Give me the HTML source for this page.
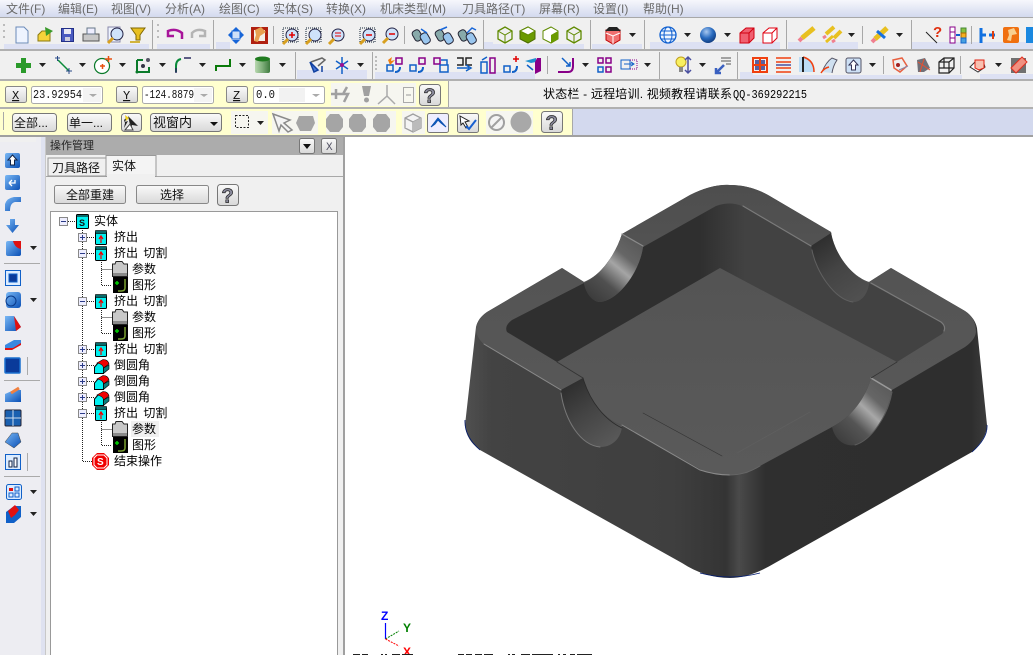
<!DOCTYPE html>
<html><head><meta charset="utf-8"><style>
html,body{margin:0;padding:0;background:#fff;overflow:hidden}
svg{display:block}
text{font-family:"Liberation Sans","WenQuanYi Zen Hei","Noto Sans CJK SC",sans-serif;font-size:12px;fill:#111}
.m{fill:#6a6a6a;font-size:12px}
.t{font-size:12px;fill:#000;word-spacing:2px}
.mono{font-family:"Liberation Mono",monospace;font-size:12px}
</style></head><body>
<svg xmlns="http://www.w3.org/2000/svg" width="1033" height="655" viewBox="0 0 1033 655">
<defs>
<linearGradient id="mb" x1="0" y1="0" x2="0" y2="1"><stop offset="0" stop-color="#f6f7fc"/><stop offset="1" stop-color="#d3d9ee"/></linearGradient>
<linearGradient id="btn" x1="0" y1="0" x2="0" y2="1"><stop offset="0" stop-color="#fafafa"/><stop offset="1" stop-color="#d8d8d8"/></linearGradient>
<linearGradient id="cyl" x1="0" y1="0" x2="1" y2="0"><stop offset="0" stop-color="#b8d8b0"/><stop offset=".5" stop-color="#7fae7a"/><stop offset="1" stop-color="#3d7a3d"/></linearGradient>
<radialGradient id="sph" cx=".4" cy=".3" r=".8"><stop offset="0" stop-color="#a8c8f0"/><stop offset=".5" stop-color="#2a6cc0"/><stop offset="1" stop-color="#0a3070"/></radialGradient>
<linearGradient id="blu" x1="0" y1="0" x2="1" y2="1"><stop offset="0" stop-color="#7ab8f5"/><stop offset="1" stop-color="#0a4fb5"/></linearGradient>
<linearGradient id="side" gradientUnits="userSpaceOnUse" x1="465" y1="0" x2="987" y2="0">
<stop offset="0" stop-color="#505050"/><stop offset=".05" stop-color="#434343"/><stop offset=".4" stop-color="#3f3f3f"/><stop offset=".5" stop-color="#343434"/><stop offset=".525" stop-color="#4a4a4a"/><stop offset=".575" stop-color="#2f2f2f"/><stop offset=".97" stop-color="#2e2e2e"/><stop offset="1" stop-color="#3c3c3c"/></linearGradient>
<linearGradient id="top" gradientUnits="userSpaceOnUse" x1="725" y1="185" x2="725" y2="475"><stop offset="0" stop-color="#4e4e4e"/><stop offset=".3" stop-color="#545454"/><stop offset="1" stop-color="#5a5a5a"/></linearGradient>
<linearGradient id="cav" gradientUnits="userSpaceOnUse" x1="700" y1="0" x2="745" y2="0"><stop offset="0" stop-color="#2f2f2f"/><stop offset="1" stop-color="#424242"/></linearGradient>
<linearGradient id="n1" gradientUnits="userSpaceOnUse" x1="590" y1="300" x2="640" y2="240"><stop offset="0" stop-color="#3a3a3a"/><stop offset=".3" stop-color="#505050"/><stop offset=".55" stop-color="#a5a5a5"/><stop offset=".72" stop-color="#666"/><stop offset="1" stop-color="#575757"/></linearGradient>
<linearGradient id="n2" gradientUnits="userSpaceOnUse" x1="815" y1="240" x2="860" y2="305"><stop offset="0" stop-color="#2d2d2d"/><stop offset=".45" stop-color="#444"/><stop offset="1" stop-color="#525252"/></linearGradient>
<linearGradient id="n3" gradientUnits="userSpaceOnUse" x1="565" y1="385" x2="610" y2="448"><stop offset="0" stop-color="#2d2d2d"/><stop offset=".45" stop-color="#444"/><stop offset="1" stop-color="#5a5a5a"/></linearGradient>
<linearGradient id="n4" gradientUnits="userSpaceOnUse" x1="835" y1="442" x2="888" y2="385"><stop offset="0" stop-color="#3a3a3a"/><stop offset=".35" stop-color="#555"/><stop offset=".58" stop-color="#a8a8a8"/><stop offset=".75" stop-color="#666"/><stop offset="1" stop-color="#5a5a5a"/></linearGradient>
<polygon id="a" points="0,0 7,0 3.5,4" fill="#222"/>
<g id="cy"><rect x=".5" y="1.500" width="11" height="13" rx="1" fill="#00f0f0" stroke="#000"/><rect x=".5" y=".5" width="11" height="3" fill="#0a6a6a" stroke="#000" stroke-width=".6"/><path d="M6,13V7M4,9L6,6L8,9" stroke="#f00000" stroke-width="1.200" fill="none"/></g>
<g id="fo"><path d="M.5,3H3L4,.5H10L12,3H15.500V15.500H.5Z" fill="#c8c8c8" stroke="#222"/><rect x="1" y="12" width="14" height="3" fill="#8a8a8a"/></g>
<g id="im"><rect width="15" height="16" fill="#000"/><path d="M12,2V11Q12,14 8,14H5" stroke="#7aa030" stroke-width="1.500" fill="none"/><path d="M4,4V8M2,6H6" stroke="#0c0" stroke-width="1.500"/></g>
<g id="fi"><path d="M.5,8L4,4H9.500V14.500H.5Z" fill="#00f0f0" stroke="#000"/><path d="M9.500,14.500L15,10V6L9.500,9Z" fill="#0a7a7a" stroke="#000" stroke-width=".6"/><path d="M3,4L9,.5Q14,.5 15,5L9.500,9Q9,5 3,4Z" fill="#f00000" stroke="#000" stroke-width=".6"/></g>
<g id="pl"><rect width="8" height="8" x=".5" y=".5" fill="#eef" stroke="#888"/><path d="M2,4.500H7M4.500,2V7" stroke="#2a3a88"/></g>
<g id="mi"><rect width="8" height="8" x=".5" y=".5" fill="#eef" stroke="#888"/><path d="M2,4.500H7" stroke="#2a3a88"/></g>
<g id="q"><rect x=".5" y=".5" width="21" height="21" rx="3" fill="url(#btn)" stroke="#777"/><text x="4.500" y="18.500" style="font:bold 20px 'Liberation Sans';fill:#8a8a9c;stroke:#222;stroke-width:.7">?</text></g>
<g id="zm"><circle cx="10" cy="7" r="6" fill="#cfe2fa" stroke="#224"/><path d="M6,11L1,16" stroke="#d8a020" stroke-width="3"/></g>
<g id="bi"><rect x="0" y="3" width="8" height="11" rx="3" transform="rotate(-30 4 8)" fill="#8aa" stroke="#223"/><rect x="8" y="6" width="8" height="11" rx="3" transform="rotate(-30 12 11)" fill="#9ac6ee" stroke="#223"/></g>
<g id="cb"><path d="M1,4L8,0L15,4V12L8,16L1,12Z" fill="none" stroke="#5f8a00" stroke-width="1.300"/><path d="M1,4L8,8L15,4M8,8V16" stroke="#5f8a00" fill="none"/></g>
<g id="hx"><path d="M4,0H13L17,5V13L13,18H4L0,13V5Z" fill="#a5a5a5"/></g>
</defs>

<!-- base chrome -->
<rect width="1033" height="138" fill="#d3d9ee"/>
<rect width="1033" height="17" fill="url(#mb)"/>
<rect y="17" width="1033" height="1" fill="#a8a8a8"/>
<rect y="18" width="1033" height="31" fill="#f0f0f0"/>
<rect y="49" width="1033" height="2" fill="#b0b0b0"/>
<rect y="51" width="1033" height="28" fill="#f0f0f0"/>
<rect y="79" width="1033" height="2" fill="#b0b0b0"/>
<rect y="81" width="1033" height="26" fill="#f0f0f0"/>
<rect y="81" width="448" height="26" fill="#ffffcf"/>
<rect y="107" width="1033" height="2" fill="#b0b0b0"/>
<rect y="109" width="572" height="26" fill="#ffffcf"/>
<rect x="572" y="109" width="461" height="26" fill="#d3d9ee"/>
<rect y="135" width="1033" height="2" fill="#a0a0a0"/>
<g fill="#f6f6f0"><rect x="331" y="83" width="85" height="23"/><rect x="231" y="111" width="37" height="23"/><rect x="272" y="111" width="46" height="23"/><rect x="326" y="111" width="70" height="23"/><rect x="402" y="111" width="23" height="23"/><rect x="486" y="111" width="47" height="23"/></g>
<!-- lavender accents -->
<g fill="#dde1f3"><rect x="4" y="44" width="145" height="5"/><rect x="157" y="44" width="53" height="5"/><rect x="216" y="42" width="14" height="7"/><rect x="484" y="42" width="9" height="7"/><rect x="484" y="44" width="100" height="5"/><rect x="592" y="44" width="50" height="5"/><rect x="650" y="42" width="130" height="7"/><rect x="788" y="42" width="70" height="7"/><rect x="912" y="42" width="121" height="7"/><rect x="297" y="70" width="70" height="9"/><rect x="375" y="72" width="160" height="7"/><rect x="980" y="74" width="53" height="5"/><rect x="740" y="72" width="13" height="7"/><rect x="752" y="75" width="210" height="4"/></g>
<!-- grips/separators -->
<g fill="#a8a8a8"><rect x="152" y="20" width="1" height="29"/><rect x="213" y="20" width="1" height="29"/><rect x="483" y="20" width="1" height="29"/><rect x="590" y="20" width="1" height="29"/><rect x="644" y="20" width="1" height="29"/><rect x="786" y="20" width="1" height="29"/><rect x="911" y="20" width="1" height="29"/><rect x="295" y="52" width="1" height="27"/><rect x="372" y="52" width="1" height="27"/><rect x="659" y="52" width="1" height="27"/><rect x="737" y="52" width="1" height="27"/><rect x="273" y="26" width="1" height="18"/><rect x="404" y="26" width="1" height="18"/><rect x="862" y="26" width="1" height="18"/><rect x="971" y="26" width="1" height="18"/><rect x="547" y="56" width="1" height="18"/><rect x="883" y="56" width="1" height="18"/><rect x="960" y="56" width="1" height="18"/><rect x="448" y="81" width="1" height="26"/><rect x="572" y="109" width="1" height="26"/><rect x="3" y="112" width="1" height="18"/></g>

<!-- menu -->
<text class="m" x="6" y="13">文件(F)</text><text class="m" x="58" y="13">编辑(E)</text><text class="m" x="111" y="13">视图(V)</text><text class="m" x="165" y="13">分析(A)</text><text class="m" x="219" y="13">绘图(C)</text><text class="m" x="273" y="13">实体(S)</text><text class="m" x="326" y="13">转换(X)</text><text class="m" x="380" y="13">机床类型(M)</text><text class="m" x="462" y="13">刀具路径(T)</text><text class="m" x="539" y="13">屏幕(R)</text><text class="m" x="593" y="13">设置(I)</text><text class="m" x="643" y="13">帮助(H)</text>

<!-- row 1 -->
<path d="M16,27H24L28,31V43H16Z" fill="#eef4ff" stroke="#6a8ab8"/>
<path d="M38,35L42,31H50V41H38Z" fill="#f5d33a" stroke="#8a7a10"/><path d="M45,27L53,31L46,36Z" fill="#3a9a2a"/>
<rect x="61.500" y="28.500" width="12" height="13" fill="#4a5ac0" stroke="#223088"/><rect x="64" y="29" width="7" height="5" fill="#e8e8f4"/><rect x="65" y="37" width="5" height="4" fill="#ccd"/>
<rect x="83" y="34" width="16" height="7" fill="#c8c8c8" stroke="#555"/><path d="M87,34V28H95V34Z" fill="#eef" stroke="#678"/>
<path d="M108,27H120V42H108Z" fill="#eef4ff" stroke="#88a"/><use href="#zm" x="107" y="27"/>
<path d="M131,28H145L140,35V40H136V35Z" fill="#e8c020" stroke="#806800"/><path d="M130,42H140" stroke="#c8a000" stroke-width="1.500"/>
<path d="M168,31Q176,28 182,33V39M168,30V36H174" fill="none" stroke="#a8149a" stroke-width="2.500"/>
<path d="M205,31Q197,28 192,33V38M205,30V36H199" fill="none" stroke="#b4b4b4" stroke-width="2.500"/>
<path d="M236,27L240,31H232ZM236,44L232,40H240ZM228,35L232,31V39ZM244,35L240,39V31Z" fill="#1866d8"/><rect x="232" y="31" width="8" height="8" fill="#cfe0f8" stroke="#1866d8"/>
<rect x="251" y="27" width="17" height="17" fill="#b02010"/><rect x="254" y="30" width="11" height="11" fill="#f4f0e8"/><path d="M255,30L261,27L266,32L260,36L258,42L254,41L256,35Z" fill="#e8a050"/>
<g><rect x="283" y="28" width="15" height="14" fill="none" stroke="#123" stroke-dasharray="1 1"/><use href="#zm" x="282" y="28"/><path d="M289,35H295M292,32V38" stroke="#e00000" stroke-width="1.500"/></g>
<g><rect x="306" y="28" width="15" height="14" fill="none" stroke="#123" stroke-dasharray="1 1"/><use href="#zm" x="305" y="28"/></g>
<g><use href="#zm" x="328" y="28"/><path d="M335,33H341M335,36H341" stroke="#e00000"/></g>
<g><rect x="360" y="28" width="15" height="14" fill="none" stroke="#123" stroke-dasharray="1 1"/><use href="#zm" x="359" y="28"/><path d="M366,35H372" stroke="#e00000" stroke-width="1.500"/></g>
<g><use href="#zm" x="382" y="27"/><path d="M389,34H395" stroke="#e00000" stroke-width="1.500"/></g>
<use href="#bi" x="413" y="27"/><use href="#bi" x="436" y="27"/><use href="#bi" x="459" y="27"/>
<path d="M421,29L427,33M440,30L447,27M467,33L472,28L476,30" stroke="#1866d8" fill="none" stroke-width="1.500"/>
<use href="#cb" x="497" y="27"/>
<path d="M520,31L528,27L535,31V39L528,43L520,39Z" fill="#6a9a00" stroke="#4a6a00"/><path d="M520,31L528,35L535,31L528,27Z" fill="#fff" stroke="#5f8a00"/>
<path d="M543,31L551,27L558,31V39L551,43L543,39Z" fill="#fff" stroke="#5f8a00"/><path d="M551,35L558,31V39L551,43Z" fill="#6a9a00"/>
<use href="#cb" x="566" y="27"/>
<path d="M606,30H620V40L613,44L606,40Z" fill="#f07070" stroke="#c00000"/><path d="M605,31L609,27H617L621,31Z" fill="#222"/><path d="M613,36V44M606,33L613,36L620,33" stroke="#fff" fill="none"/>
<use href="#a" x="629" y="33"/>
<circle cx="668" cy="35" r="8" fill="#eef5ff" stroke="#1060d0" stroke-width="1.300"/><ellipse cx="668" cy="35" rx="4" ry="8" fill="none" stroke="#1060d0"/><path d="M660,35H676M661,31H675M661,39H675" stroke="#1060d0"/>
<use href="#a" x="684" y="33"/>
<circle cx="708" cy="35" r="8" fill="url(#sph)"/>
<use href="#a" x="724" y="33"/>
<path d="M740,33L746,28H754V38L749,43H740Z" fill="#f06070" stroke="#d00010"/><path d="M740,33H749V43M749,33L754,28" stroke="#d00010" fill="none"/>
<path d="M763,33L769,28H777V38L772,43H763Z" fill="#fff" stroke="#e00010"/><path d="M763,33H772V43M772,33L777,28" stroke="#e00010" fill="none"/>
<path d="M802,38L814,28" stroke="#e8c020" stroke-width="5"/><path d="M802,38L799,41" stroke="#f08090" stroke-width="4"/>
<path d="M826,34L834,27" stroke="#e8c020" stroke-width="4"/><path d="M834,38L841,31" stroke="#e8c020" stroke-width="4"/><path d="M826,42L833,36" stroke="#e8c020" stroke-width="3"/><path d="M826,36L823,38M835,40L832,42" stroke="#f08090" stroke-width="3"/>
<use href="#a" x="848" y="33"/>
<path d="M875,39L887,28" stroke="#e8c020" stroke-width="5"/><path d="M877,31L885,38" stroke="#1870e0" stroke-width="3"/><path d="M875,39L872,42" stroke="#f08090" stroke-width="4"/>
<use href="#a" x="896" y="33"/>
<path d="M926,32L937,43" stroke="#222"/><text x="933" y="37" style="font:bold 15px 'Liberation Sans';fill:#e03010">?</text>
<rect x="950" y="27" width="5" height="16" fill="#fff" stroke="#880088"/><path d="M950,32H955M950,38H955" stroke="#880088"/><rect x="961" y="28" width="5" height="5" fill="#88c040" stroke="#483"/><rect x="961" y="33" width="5" height="5" fill="#f4b020" stroke="#a60"/><rect x="961" y="38" width="5" height="5" fill="#48a0e0" stroke="#16c"/><path d="M956,35H960" stroke="#1060d0" stroke-width="2"/>
<path d="M981,28V43M981,35H986M995,35H989" stroke="#1070e0" stroke-width="3"/><path d="M993,31V39" stroke="#e04010" stroke-width="2"/>
<rect x="1003" y="27" width="16" height="16" rx="2" fill="#f07010"/><path d="M1008,30L1014,28L1017,34L1012,35L1011,41L1007,40L1009,35Z" fill="#f8d090"/>
<rect x="1026" y="27" width="7" height="16" fill="#1a88e0"/>

<!-- row 2 -->
<path d="M21,58H26V63H31V68H26V73H21V68H16V63H21Z" fill="#2a9a2a"/>
<use href="#a" x="39" y="63"/>
<path d="M58,60L69,71" stroke="#0a8a3a" stroke-width="1.500"/><path d="M55,58H60M57.500,56V61M66,71H72M69,68V74" stroke="#2a4a88"/>
<use href="#a" x="79" y="63"/>
<circle cx="102" cy="66" r="7.500" fill="#fff" stroke="#0a7a2a" stroke-width="1.200"/><path d="M100,66H105M102.500,64V69M105,59H112M108.500,56V62" stroke="#e85010" stroke-width="1.500"/>
<use href="#a" x="119" y="63"/>
<path d="M137,60V72H149V67M137,60H143" fill="none" stroke="#0a7a2a" stroke-width="2"/><circle cx="143" cy="66" r="2" fill="#334"/><circle cx="148" cy="60" r="2" fill="#556"/><circle cx="137" cy="72" r="1.500" fill="#0a7a2a"/>
<use href="#a" x="159" y="63"/>
<path d="M176,72V66Q176,60 181,59" fill="none" stroke="#0a8a3a" stroke-width="2"/><path d="M184,58H191M176,68V73" stroke="#2a2a60" stroke-width="1.500"/>
<use href="#a" x="199" y="63"/>
<path d="M216,71V66H230V59" fill="none" stroke="#0a7a0a" stroke-width="2"/>
<use href="#a" x="239" y="63"/>
<rect x="255" y="59" width="15" height="14" fill="url(#cyl)" rx="2"/><ellipse cx="262.500" cy="59" rx="7.500" ry="2.500" fill="#1f7a1f"/>
<use href="#a" x="279" y="63"/>
<path d="M311,62L322,58L325,60L318,66" fill="none" stroke="#666" stroke-width="1.500"/><path d="M310,62L318,70L314,72ZM322,66V72" stroke="#1040a0" stroke-width="1.500" fill="#4a78d8"/>
<path d="M342,57V74M336,61L348,69M348,61L336,69" stroke="#1060c8" stroke-width="1.500"/><circle cx="342" cy="65" r="2" fill="#a01090"/>
<use href="#a" x="357" y="63"/>
<g fill="#bbb"><rect x="375" y="56" width="2" height="2"/><rect x="375" y="60" width="2" height="2"/><rect x="375" y="64" width="2" height="2"/><rect x="375" y="68" width="2" height="2"/><rect x="3" y="24" width="2" height="2"/><rect x="3" y="30" width="2" height="2"/><rect x="3" y="36" width="2" height="2"/><rect x="157" y="24" width="2" height="2"/><rect x="157" y="30" width="2" height="2"/><rect x="157" y="36" width="2" height="2"/></g>
<g><rect x="387" y="65" width="6" height="6" fill="none" stroke="#1060c8" stroke-width="1.500"/><rect x="396" y="58" width="6" height="6" fill="none" stroke="#880088" stroke-width="1.500"/><path d="M388,60L392,57L391,61L395,60L390,65Z" fill="#f08010"/><path d="M395,72Q400,72 400,67" fill="none" stroke="#1060c8" stroke-width="2"/></g>
<g><rect x="410" y="65" width="6" height="6" fill="none" stroke="#1060c8" stroke-width="1.500"/><rect x="419" y="58" width="6" height="6" fill="none" stroke="#880088" stroke-width="1.500"/><path d="M418,72Q423,72 423,67" fill="none" stroke="#1060c8" stroke-width="2"/></g>
<g><rect x="434" y="58" width="6" height="6" fill="none" stroke="#880088" stroke-width="1.500"/><rect x="440" y="65" width="8" height="7" fill="none" stroke="#1060c8" stroke-width="1.500"/><path d="M441,60H447V65" fill="none" stroke="#1060c8" stroke-width="1.500"/></g>
<g><path d="M457,58H463V65H457M472,58H466V65H472" fill="none" stroke="#222" stroke-width="1.500"/><path d="M457,68H469M466,65L471,68L466,71" fill="none" stroke="#1060c8" stroke-width="1.500"/></g>
<g><rect x="481" y="62" width="6" height="11" fill="none" stroke="#1060c8" stroke-width="1.500"/><rect x="490" y="58" width="5" height="15" fill="none" stroke="#880088" stroke-width="1.500"/><path d="M482,60L487,57" stroke="#1060c8" stroke-width="1.500"/></g>
<g><rect x="504" y="66" width="6" height="6" fill="none" stroke="#1060c8" stroke-width="1.500"/><path d="M513,59H519M516,56V62" stroke="#e00000" stroke-width="1.500"/><path d="M512,72Q517,72 517,66" fill="none" stroke="#1060c8" stroke-width="2"/></g>
<g><path d="M525,61L536,58V62L531,63Z" fill="#2090d0"/><path d="M537,58H541V71L535,74V62Z" fill="#880088"/><path d="M527,65L533,70" stroke="#1060c8" stroke-width="1.500"/></g>
<path d="M558,72H568Q573,72 573,66V58" fill="none" stroke="#880088" stroke-width="2"/><path d="M562,58L570,66M566,66H570V62" fill="none" stroke="#1060c8" stroke-width="1.500"/>
<use href="#a" x="582" y="63"/>
<g fill="none" stroke-width="1.500"><rect x="598" y="58" width="5" height="5" stroke="#880088"/><rect x="606" y="58" width="5" height="5" stroke="#880088"/><rect x="598" y="67" width="5" height="5" stroke="#1060c8"/><rect x="606" y="67" width="5" height="5" stroke="#880088"/></g>
<rect x="621" y="60" width="9" height="9" fill="none" stroke="#1060c8"/><path d="M630,60H637V69H630" fill="none" stroke="#880088" stroke-dasharray="1 1"/><path d="M624,64H633M631,62L634,64L631,66" fill="none" stroke="#1060c8"/>
<use href="#a" x="644" y="63"/>
<circle cx="681" cy="62" r="5" fill="#f8f060" stroke="#c0a020"/><rect x="679" y="67" width="4" height="5" fill="#888"/><path d="M688,57V73M685,60L688,57L691,60M685,70L688,73L691,70" fill="none" stroke="#4a50a0" stroke-width="1.500"/>
<use href="#a" x="699" y="63"/>
<path d="M716,73L724,65M716,68V73H721" fill="none" stroke="#3a60c0" stroke-width="2.500"/><path d="M721,58H731M721,61H731M726,64H731" stroke="#555"/>
<g fill="none" stroke="#f04010" stroke-width="2"><rect x="753" y="58" width="14" height="14"/><path d="M760,58V72M753,65H767"/></g><rect x="755" y="60" width="4" height="4" fill="#5a60a0"/><rect x="761" y="60" width="4" height="4" fill="#5a60a0"/><rect x="755" y="66" width="4" height="4" fill="#5a60a0"/><rect x="761" y="66" width="4" height="4" fill="#5a60a0"/>
<path d="M776,58H791M776,72H791M776,62H791M776,68H791" stroke="#f04010" stroke-width="1.500"/><path d="M776,65H791" stroke="#4a50a0" stroke-width="1.500"/>
<path d="M799,72V57H803Q814,60 814,72Z" fill="#bcdcf5"/><path d="M803,57Q814,60 814,72" fill="none" stroke="#f04010" stroke-width="1.500"/><path d="M803,57V72" stroke="#222" stroke-width="2"/>
<path d="M822,72Q826,62 832,58L837,60Q833,66 832,73" fill="#cfe0f0" stroke="#556"/><path d="M821,73Q824,68 829,67" fill="none" stroke="#f04010" stroke-width="1.500"/>
<rect x="846" y="58" width="15" height="15" rx="2" fill="#cde0f5" stroke="#556"/><path d="M853.500,60L858,65H855.500V70H851.500V65H849Z" fill="#fff" stroke="#335"/>
<use href="#a" x="869" y="63"/>
<path d="M893,60L902,58L907,66L900,72L894,68Z" fill="none" stroke="#e86040" stroke-width="1.500"/><circle cx="898" cy="65" r="2" fill="#a02020"/><path d="M899,70L908,66" stroke="#88a"/>
<path d="M917,60L925,58L930,68L924,72L918,72Z" fill="#707078"/><path d="M918,62L930,70M924,59L920,72" stroke="#e85030"/>
<g fill="none" stroke="#222" stroke-width="1.200"><path d="M939,62L944,58H954V68L949,73H939Z"/><path d="M939,62H949V73M949,62L954,58M944,58V68H954M939,68H949"/></g>
<path d="M970,67L976,61H983L985,67L978,72Z" fill="#fff" stroke="#333"/><path d="M975,60H984V68L979,70L975,68Z" fill="#f8c0b0" stroke="#e02010"/>
<use href="#a" x="995" y="63"/>
<rect x="1011" y="58" width="15" height="15" fill="#707070"/><path d="M1011,68L1022,57L1027,62L1016,73Z" fill="#f09080" stroke="#e03020"/>

<!-- row 3 -->
<g><rect x="5.500" y="86.500" width="21" height="16" rx="2" fill="url(#btn)" stroke="#888"/><text x="12" y="99" style="font:12px 'Liberation Mono';text-decoration:underline">X</text></g>
<g><rect x="31.500" y="86.500" width="71" height="17" rx="2" fill="#fff" stroke="#aaa"/><text class="mono" x="33" y="98" textLength="49" lengthAdjust="spacingAndGlyphs">23.92954</text><rect x="83" y="88" width="18" height="14" fill="#f4f4f4"/><polygon points="89,94 97,94 93,97" fill="#aaa"/></g>
<g><rect x="116.500" y="86.500" width="21" height="16" rx="2" fill="url(#btn)" stroke="#888"/><text x="123" y="99" style="font:12px 'Liberation Mono';text-decoration:underline">Y</text></g>
<g><rect x="142.500" y="86.500" width="71" height="17" rx="2" fill="#fff" stroke="#aaa"/><text class="mono" x="144" y="98" textLength="50" lengthAdjust="spacingAndGlyphs">-124.8879</text><rect x="194" y="88" width="18" height="14" fill="#f4f4f4"/><polygon points="200,94 208,94 204,97" fill="#aaa"/></g>
<g><rect x="226.500" y="86.500" width="21" height="16" rx="2" fill="url(#btn)" stroke="#888"/><text x="233" y="99" style="font:12px 'Liberation Mono';text-decoration:underline">Z</text></g>
<g><rect x="253.500" y="86.500" width="71" height="17" rx="2" fill="#fff" stroke="#aaa"/><rect x="279" y="88" width="26" height="14" fill="#f2f2f2"/><text class="mono" x="256" y="98" textLength="19" lengthAdjust="spacingAndGlyphs">0.0</text><polygon points="312,94 320,94 316,97" fill="#aaa"/></g>
<path d="M336,89V99M331,94H342M347,87L343,94H348L344,102" stroke="#a0a0a0" stroke-width="2.500" fill="none"/>
<path d="M362,86H371L369,96H364Z" fill="#a0a0a0"/><circle cx="366.500" cy="100" r="2.500" fill="#a0a0a0"/>
<path d="M387,85V96L378,104M387,96L395,104" fill="none" stroke="#aaa" stroke-width="1.500"/><rect x="403.500" y="87.500" width="10" height="15" fill="#f8f8f0" stroke="#aaa"/><path d="M406,95H411" stroke="#999"/>
<use href="#q" x="419" y="84"/>
<text x="543" y="98" textLength="189" style="font-size:12px;fill:#000">状态栏 - 远程培训. 视频教程请联系</text>
<text x="733" y="98" style="font-family:'Liberation Mono';font-size:12px;fill:#000" textLength="74" lengthAdjust="spacingAndGlyphs">QQ-369292215</text>

<!-- row 4 -->
<g><rect x="12.500" y="113.500" width="44" height="18" rx="3" fill="url(#btn)" stroke="#777"/><text x="14" y="127">全部...</text></g>
<g><rect x="67.500" y="113.500" width="44" height="18" rx="3" fill="url(#btn)" stroke="#777"/><text x="69" y="127">单一...</text></g>
<g><rect x="121.500" y="113.500" width="20" height="18" rx="3" fill="url(#btn)" stroke="#777"/><path d="M128,116L138,126L132,125L131,129ZM124,120L127,117L125,122L128,121L124,128L125,123Z" fill="#222"/><path d="M125,115L129,118L126,121Z" fill="#f0d020"/><path d="M125,130L130,124L133,130Z" fill="#fff" stroke="#444"/></g>
<g><rect x="150.500" y="113.500" width="71" height="18" rx="3" fill="url(#btn)" stroke="#777"/><text x="153" y="127" style="font-size:13px">视窗内</text><polygon points="210,122 218,122 214,126" fill="#111"/></g>
<rect x="235.500" y="115.500" width="13" height="12" fill="none" stroke="#222" stroke-dasharray="2 1.500"/><use href="#a" x="257" y="121"/>
<path d="M273,114L290,120L284,123L292,130L288,132L281,125L279,131Z" fill="#f4f4f4" stroke="#8a8a8a" stroke-width="1.500"/>
<path d="M299,116H313L315,123L311,131H300L296,123Z" fill="#a5a5a5"/><use href="#hx" x="326" y="114"/><use href="#hx" x="349" y="114"/><use href="#hx" x="373" y="114"/>
<g fill="#f4f4f4" stroke="#a0a0a0" stroke-width="1.300"><path d="M405,118L413,114L421,118V128L413,132L405,128Z"/><path d="M405,118L413,122L421,118M413,122V132" fill="none"/></g><path d="M413,122L421,118V128L413,132Z" fill="#bbb"/>
<g><rect x="427.500" y="113.500" width="21" height="19" rx="2" fill="#eef" stroke="#777"/><path d="M431,127L438,118L446,127L441,123L438,120L435,124Z" fill="#0a70d8" stroke="#0a50b0"/></g>
<g><rect x="457.500" y="113.500" width="21" height="19" rx="2" fill="url(#btn)" stroke="#777"/><path d="M460,116L469,121L465,122L468,127L466,128L463,123L461,125Z" fill="#fff" stroke="#222"/><path d="M466,126L469,129L476,120" fill="none" stroke="#1860d0" stroke-width="2"/></g>
<circle cx="496.500" cy="122.500" r="7.500" fill="#f4f4f4" stroke="#a0a0a0" stroke-width="2"/><path d="M491,128L502,117" stroke="#a0a0a0" stroke-width="2"/>
<circle cx="521" cy="122" r="10.500" fill="#a8a8a8"/>
<use href="#q" x="541" y="111"/>

<!-- left toolbar -->
<rect y="137" width="45" height="518" fill="#ededf2"/>
<rect x="41" y="137" width="4" height="518" fill="#dfe2f0"/>
<rect y="137" width="36" height="5" fill="#f0f0f0"/>
<rect x="45" y="137" width="1" height="518" fill="#c8c8c8"/>
<rect x="46" y="137" width="4" height="518" fill="#f0f0f0"/>
<g>
<rect x="5" y="153" width="15" height="15" rx="2" fill="url(#blu)"/><path d="M12.500,155L17,160H14.500V165H10.500V160H8Z" fill="#fff" stroke="#124"/>
<rect x="5" y="175" width="15" height="15" rx="2" fill="url(#blu)"/><path d="M9,183H15V180M9,183L12,186M9,183L12,180" stroke="#fff" fill="none" stroke-width="1.300"/>
<path d="M5,211V204Q7,198 14,197H21V202H15Q10,203 10,211Z" fill="url(#blu)"/>
<path d="M10,219H15V225H19L12.500,233L6,225H10Z" fill="url(#blu)"/>
<rect x="6" y="241" width="15" height="15" rx="2" fill="url(#blu)"/><path d="M13,241H21V249Q15,248 13,241Z" fill="#e01010"/><use href="#a" x="30" y="246"/>
<rect x="4" y="263" width="36" height="1" fill="#aaa"/>
<rect x="5.500" y="270.500" width="15" height="15" fill="#dcecff" stroke="#1060c8"/><rect x="9" y="274" width="8" height="8" fill="#0a3a9a" stroke="#1060c8"/>
<rect x="6" y="292" width="15" height="16" rx="3" fill="url(#blu)"/><circle cx="11" cy="301" r="5" fill="none" stroke="#0a3a8a"/><use href="#a" x="30" y="298"/>
<path d="M5,316H14L21,327L16,331H5Z" fill="url(#blu)"/><path d="M14,316L21,327L16,331Z" fill="#e01010"/>
<path d="M5,345L14,340H21V344L12,350H5Z" fill="#3a88e0"/><path d="M5,348H13L21,343V345L12,350H5Z" fill="#e01010"/>
<rect x="5" y="358" width="15" height="15" rx="1" fill="#0a3a9a" stroke="#1a70d0" stroke-width="1.500"/><rect x="27" y="357" width="1" height="18" fill="#aaa"/>
<rect x="4" y="380" width="36" height="1" fill="#aaa"/>
<path d="M5,394L14,390H21V402H5Z" fill="url(#blu)"/><path d="M11,393L19,388" stroke="#f08040" stroke-width="3"/>
<rect x="5" y="410" width="16" height="16" rx="1" fill="#1a60b0" stroke="#223"/><path d="M13,410V426M5,418H21" stroke="#cde"/>
<path d="M5,442L12,433H18L21,442L14,448Z" fill="url(#blu)" stroke="#444" stroke-width=".5"/>
<rect x="5.500" y="454.500" width="15" height="15" fill="#dcecff" stroke="#1060c8"/><rect x="9" y="461" width="3" height="6" fill="#fff" stroke="#124"/><rect x="14" y="458" width="3" height="9" fill="#fff" stroke="#124"/><rect x="27" y="453" width="1" height="18" fill="#aaa"/>
<rect x="4" y="476" width="36" height="1" fill="#aaa"/>
<rect x="6.500" y="484.500" width="15" height="15" rx="2" fill="#dcecff" stroke="#1060c8"/><rect x="9" y="488" width="4" height="3" fill="#e01010"/><g fill="none" stroke="#1060c8"><rect x="15" y="487" width="4" height="4"/><rect x="9" y="493" width="4" height="4"/><rect x="15" y="493" width="4" height="4"/></g><use href="#a" x="30" y="490"/>
<path d="M6,512L14,506H21V517L14,523H6Z" fill="#1060c8"/><path d="M8,511L15,505L19,510L15,515L11,518Z" fill="#e01010"/><use href="#a" x="30" y="512"/>
</g>

<!-- panel -->
<rect x="46" y="137" width="297" height="18" fill="#acacac"/>
<text x="50" y="149" style="font-size:11px;fill:#222">操作管理</text>
<rect x="299.500" y="138.500" width="15" height="15" rx="2" fill="url(#btn)" stroke="#777"/><polygon points="303,144 311,144 307,149" fill="#111"/>
<rect x="321.500" y="138.500" width="15" height="15" rx="2" fill="url(#btn)" stroke="#777"/><text x="326" y="150" style="font:11px 'Liberation Mono';fill:#556">X</text>
<rect x="46" y="155" width="297" height="21" fill="#f0f0f0"/>
<rect x="46" y="176" width="297" height="479" fill="#f0f0f0"/>
<rect x="46" y="176" width="297" height="1" fill="#a8a8a8"/>
<rect x="48" y="158" width="58" height="18" fill="#f0f0f0" stroke="#999"/>
<text x="52" y="172" style="font-size:12px">刀具路径</text>
<rect x="106" y="155.500" width="50" height="21" fill="#f4f4f4" stroke="#999"/><rect x="107" y="174" width="48" height="4" fill="#f0f0f0"/>
<text x="112" y="170" style="font-size:12px">实体</text>
<rect x="54.500" y="185.500" width="71" height="18" rx="2" fill="url(#btn)" stroke="#888"/><text x="66" y="199">全部重建</text>
<rect x="136.500" y="185.500" width="72" height="18" rx="2" fill="url(#btn)" stroke="#888"/><text x="160" y="199">选择</text>
<use href="#q" x="217" y="184"/>
<rect x="50.500" y="211.500" width="287" height="450" fill="#fff" stroke="#999"/>
<rect x="338" y="177" width="5" height="478" fill="#f0f0f0"/>
<rect x="343" y="137" width="2" height="518" fill="#a0a0a0"/>

<!-- tree -->
<g stroke="#222" stroke-dasharray="1 1" fill="none"><path d="M82.500,228V461.500H92"/><path d="M68,221.500H75"/><path d="M87,237.500H94M87,253.500H94M87,301.500H94M87,349.500H94M87,365.500H94M87,381.500H94M87,397.500H94M87,413.500H94"/><path d="M101.500,262V285.500H112M101.500,269.500H112M101.500,310V333.500H112M101.500,317.500H112M101.500,422V445.500H112M101.500,429.500H112"/></g>
<use href="#mi" x="59" y="217"/>
<rect x="76.500" y="214.500" width="12" height="14" rx="1" fill="#00f0f0" stroke="#000"/><rect x="77" y="215" width="11" height="2" fill="#0a6a6a"/><text x="79" y="226" style="font:bold 9px 'Liberation Sans'">S</text>
<text class="t" x="94" y="225">实体</text>
<use href="#pl" x="78" y="233"/><use href="#cy" x="95" y="230"/><text class="t" x="114" y="241">挤出</text>
<use href="#mi" x="78" y="249"/><use href="#cy" x="95" y="246"/><text class="t" x="114" y="257">挤出 切割</text>
<use href="#fo" x="112" y="261"/><text class="t" x="132" y="273">参数</text>
<use href="#im" x="113" y="277"/><text class="t" x="132" y="289">图形</text>
<use href="#mi" x="78" y="297"/><use href="#cy" x="95" y="294"/><text class="t" x="114" y="305">挤出 切割</text>
<use href="#fo" x="112" y="309"/><text class="t" x="132" y="321">参数</text>
<use href="#im" x="113" y="325"/><text class="t" x="132" y="337">图形</text>
<use href="#pl" x="78" y="345"/><use href="#cy" x="95" y="342"/><text class="t" x="114" y="353">挤出 切割</text>
<use href="#pl" x="78" y="361"/><use href="#fi" x="94" y="359"/><text class="t" x="114" y="369">倒圆角</text>
<use href="#pl" x="78" y="377"/><use href="#fi" x="94" y="375"/><text class="t" x="114" y="385">倒圆角</text>
<use href="#pl" x="78" y="393"/><use href="#fi" x="94" y="391"/><text class="t" x="114" y="401">倒圆角</text>
<use href="#mi" x="78" y="409"/><use href="#cy" x="95" y="406"/><text class="t" x="114" y="417">挤出 切割</text>
<use href="#fo" x="112" y="421"/><rect x="131" y="421" width="28" height="16" fill="#f0f0f0"/><text class="t" x="132" y="433">参数</text>
<use href="#im" x="113" y="437"/><text class="t" x="132" y="449">图形</text>
<path d="M97,453H104L109,458V465L104,470H97L92,465V458Z" fill="#f00000"/><path d="M97,455H104L107,458V465L104,468H97L94,465V458Z" fill="none" stroke="#fff"/><text x="97" y="465" style="font:bold 10px 'Liberation Sans';fill:#fff">S</text>
<text class="t" x="114" y="465">结束操作</text>

<!-- viewport -->
<rect x="345" y="137" width="688" height="518" fill="#fff"/>
<!-- model -->
<path d="M476,327Q478,318 487,312L562,268L584,282C600,276 615,256 622,234L690,195Q712,184 730,185Q750,185 768,195L831,232C834,252 850,276 869,282L891,268L965,311Q975,318 977,328L987,425Q987,438 972,452L775,563Q750,578 730,578Q705,578 682,563L480,450Q466,440 465,425Z" fill="url(#side)"/>
<path d="M465,420Q464,436 480,450M700,573Q730,581 760,573M987,425Q988,438 972,452" fill="none" stroke="#001a70" stroke-width=".8"/>
<path d="M476,330Q476,320 487,312L562,268L584,282C600,276 615,256 622,234L690,195Q712,184 730,185Q750,185 768,195L831,232C834,252 850,276 869,282L891,268L965,311Q976,318 976,332Q975,340 965,347L892,390L871,378C865,400 850,418 832,427L747,473Q730,477 705,472L622,425C605,420 590,402 583,378L561,390L486,346Q477,339 476,330Z" fill="url(#top)"/>
<!-- cavity -->
<path d="M507,332Q504,326 512,320L584,283C586,292 592,302 600,302C620,300 640,270 643,247L716,206Q730,201 742,206L811,246C815,270 835,300 853,302C862,302 868,293 869,283L941,322Q947,328 942,334L897,362L720,268L557,362Z" fill="url(#cav)"/>
<!-- notch walls -->
<path d="M584,283C600,276 615,256 622,234L643,247C640,270 620,300 600,302C592,302 585,292 584,283Z" fill="url(#n1)"/>
<path d="M831,233C834,252 850,276 869,283C868,293 862,302 853,302C835,300 815,270 811,246Z" fill="url(#n2)"/>
<path d="M561,390L583,378C590,402 605,420 622,425C622,435 615,447 600,447C580,445 562,420 561,390Z" fill="url(#n3)"/>
<path d="M871,378L892,390C888,415 872,440 855,445C845,447 835,440 832,427C850,418 865,400 871,378Z" fill="url(#n4)"/>
<!-- highlights and edges -->
<g fill="none" stroke-linecap="round">
<path d="M743,206L811,246" stroke="#7a7a7a" stroke-width="1.200"/>
<path d="M871,283L941,322Q946,326 944,331" stroke="#7a7a7a" stroke-width="1.200"/>
<path d="M622,234L643,246" stroke="#8a8a8a" stroke-width="1.200"/>
<path d="M812,250C816,272 835,300 853,302" stroke="#606060"/>
<path d="M484,344L561,390" stroke="#8a8a8a"/>
<path d="M622,425L700,470Q715,475 730,475" stroke="#8a8a8a"/>
<path d="M730,475Q745,475 760,466" stroke="#666"/>
<path d="M561,393C565,420 580,445 600,447" stroke="#777"/>
<path d="M871,378L891,390" stroke="#999" stroke-width="1.500"/>
<path d="M892,392C888,415 872,440 855,445" stroke="#5c5c5c"/>
<path d="M557,362L583,378M871,378L897,362" stroke="#333" stroke-width=".8"/>
<path d="M583,378C590,402 605,420 622,428" stroke="#2a2a2a" stroke-width=".8"/>
<path d="M643,413L722,456" stroke="#333" stroke-width=".7"/>
<path d="M737,453L810,412" stroke="#606060" stroke-width=".7"/>
</g>
<!-- axes -->
<path d="M385.500,623V639" stroke="#0000ff" stroke-width="1.200"/>
<path d="M385.500,639L399,631" stroke="#008000" stroke-dasharray="2 1"/>
<path d="M385.500,639L399,646" stroke="#ff0000" stroke-dasharray="2 1"/>
<text x="381" y="620" style="font:bold 12px 'Liberation Sans';fill:#0000ff">Z</text>
<text x="403" y="632" style="font:bold 12px 'Liberation Sans';fill:#008000">Y</text>
<text x="403" y="656" style="font:bold 12px 'Liberation Sans';fill:#ff0000">X</text>
<path d="M353,654.500H360M362,654.500H368M381,654.500H383M385,654.500H387M392,654.500H400M402,654.500H413M458,654.500H464M466,654.500H472M475,654.500H482M484,654.500H493M508,654.500H510M512,654.500H515M521,654.500H530M532,654.500H553M558,654.500H560M563,654.500H566M570,654.500H575M577,654.500H592" stroke="#222" stroke-width="1"/>
</svg>
</body></html>
